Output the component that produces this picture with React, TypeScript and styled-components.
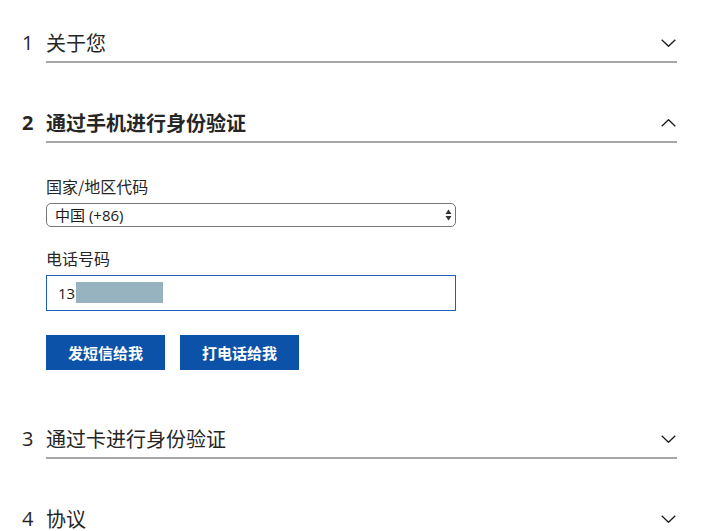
import React, { useState } from 'react';
import styled, { createGlobalStyle } from 'styled-components';

const GlobalStyle = createGlobalStyle`
  html, body {
    margin: 0;
    padding: 0;
    background: #ffffff;
  }
  body {
    font-family: 'Open Sans', 'Noto Sans CJK SC', sans-serif;
    color: #262626;
  }
`;

const Page = styled.div`
  padding: 25px 33px 0 22px;
  overflow: hidden;
  height: 531px;
  box-sizing: border-box;
`;

const Section = styled.section`
  & + & {
    margin-top: 42px;
  }
`;

const HeaderRow = styled.div`
  display: flex;
  align-items: stretch;
  cursor: pointer;
`;

const Step = styled.div<{ active: boolean }>`
  width: 24px;
  flex: none;
  height: 36px;
  line-height: 36px;
  font-size: 20px;
  font-weight: ${(p) => (p.active ? 700 : 400)};
  color: #262626;
`;

const HeaderMain = styled.div`
  flex: 1;
  display: flex;
  align-items: center;
  justify-content: space-between;
  height: 36px;
  border-bottom: 2px solid #a6a6a6;
`;

const Title = styled.h2<{ active: boolean }>`
  margin: 0;
  font-size: 20px;
  line-height: 36px;
  font-weight: ${(p) => (p.active ? 700 : 400)};
  color: #262626;
  font-family: 'Noto Sans CJK SC', sans-serif;
`;

const Chevron = styled.svg`
  width: 15px;
  height: 8px;
  margin-right: 1px;
  flex: none;
`;

const Body = styled.div`
  padding: 32px 0 9px 24px;
  width: 410px;
`;

const Label = styled.label`
  display: block;
  font-family: 'Noto Sans CJK SC', sans-serif;
  font-size: 16px;
  line-height: 22px;
  color: #262626;
  margin-bottom: 6px;
`;

const Field = styled.div`
  position: relative;
  & + label {
    margin-top: 20px;
  }
`;

const Select = styled.select`
  appearance: none;
  -webkit-appearance: none;
  width: 100%;
  height: 24px;
  box-sizing: border-box;
  border: 1px solid #767676;
  border-radius: 5px;
  background: #ffffff;
  padding: 0 20px 0 8px;
  font-family: 'Open Sans', 'Noto Sans CJK SC', sans-serif;
  font-size: 15px;
  line-height: 22px;
  color: #1a1a1a;
  outline: none;
`;

const SelectArrows = styled.svg`
  position: absolute;
  right: 4px;
  top: 6px;
  width: 7px;
  height: 12px;
  pointer-events: none;
`;

const Input = styled.input`
  width: 100%;
  height: 36px;
  box-sizing: border-box;
  border: 1px solid #1f5fb3;
  background: #ffffff;
  padding: 0 11px;
  font-family: 'Open Sans', sans-serif;
  font-size: 15px;
  color: #1a1a1a;
  outline: none;
`;

const Mask = styled.span`
  position: absolute;
  left: 30px;
  top: 7px;
  width: 87px;
  height: 21px;
  background: #97b3c0;
`;

const Buttons = styled.div`
  display: flex;
  gap: 15px;
  margin-top: 24px;
`;

const Button = styled.button`
  width: 119px;
  height: 35px;
  border: none;
  background: #0b52a8;
  color: #ffffff;
  font-family: 'Noto Sans CJK SC', sans-serif;
  font-size: 15px;
  font-weight: 600;
  cursor: pointer;
  padding: 0;
`;

const steps = [
  { no: '1', title: '关于您' },
  { no: '2', title: '通过手机进行身份验证' },
  { no: '3', title: '通过卡进行身份验证' },
  { no: '4', title: '协议' },
];

const ChevronIcon = ({ up }: { up: boolean }) => (
  <Chevron viewBox="0 0 15 8">
    <path
      d={up ? 'M0.7 7.3 L7.5 0.7 L14.3 7.3' : 'M0.7 0.7 L7.5 7.3 L14.3 0.7'}
      fill="none"
      stroke="#1a1a1a"
      strokeWidth="1.3"
    />
  </Chevron>
);

const PhoneStep = () => (
  <Body>
    <Label htmlFor="country">国家/地区代码</Label>
    <Field>
      <Select id="country" defaultValue="86">
        <option value="86">中国 (+86)</option>
      </Select>
      <SelectArrows viewBox="0 0 7 12">
        <path d="M3.5 0.5 L6.5 5 L0.5 5 Z" fill="#333" />
        <path d="M3.5 11.5 L6.5 7 L0.5 7 Z" fill="#333" />
      </SelectArrows>
    </Field>
    <Label htmlFor="phone">电话号码</Label>
    <Field>
      <Input id="phone" defaultValue="131" />
      <Mask />
    </Field>
    <Buttons>
      <Button>发短信给我</Button>
      <Button>打电话给我</Button>
    </Buttons>
  </Body>
);

const App = () => {
  const [open, setOpen] = useState<number>(1);

  return (
    <>
      <GlobalStyle />
      <Page>
        {steps.map((s, index) => {
          const active = open === index;
          return (
            <Section key={s.no}>
              <HeaderRow onClick={() => setOpen(active ? -1 : index)}>
                <Step active={active}>{s.no}</Step>
                <HeaderMain>
                  <Title active={active}>{s.title}</Title>
                  <ChevronIcon up={active} />
                </HeaderMain>
              </HeaderRow>
              {active && index === 1 ? <PhoneStep /> : null}
            </Section>
          );
        })}
      </Page>
    </>
  );
};

export default App;
